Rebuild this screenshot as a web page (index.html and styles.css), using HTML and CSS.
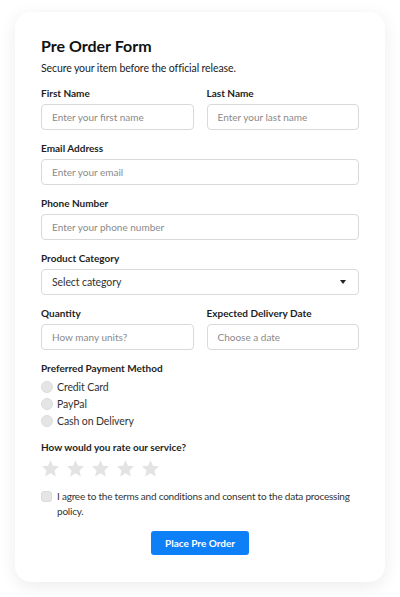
FILE: index.html
```html
<!DOCTYPE html>
<html lang="en">
<head>
<meta charset="utf-8">
<title>Pre Order Form</title>
<link rel="stylesheet" href="styles.css">
</head>
<body>
<form class="card">
  <h1 class="title">Pre Order Form</h1>
  <p class="subtitle">Secure your item before the official release.</p>

  <div class="row">
    <div class="group">
      <label class="label">First Name</label>
      <div class="input"><span class="ph">Enter your first name</span></div>
    </div>
    <div class="group">
      <label class="label">Last Name</label>
      <div class="input"><span class="ph">Enter your last name</span></div>
    </div>
  </div>

  <div class="group">
    <label class="label">Email Address</label>
    <div class="input"><span class="ph">Enter your email</span></div>
  </div>

  <div class="group">
    <label class="label">Phone Number</label>
    <div class="input"><span class="ph">Enter your phone number</span></div>
  </div>

  <div class="group">
    <label class="label">Product Category</label>
    <div class="input select"><span class="val">Select category</span><span class="caret"></span></div>
  </div>

  <div class="row">
    <div class="group">
      <label class="label">Quantity</label>
      <div class="input"><span class="ph">How many units?</span></div>
    </div>
    <div class="group">
      <label class="label">Expected Delivery Date</label>
      <div class="input"><span class="ph">Choose a date</span></div>
    </div>
  </div>

  <div class="group pay">
    <label class="label">Preferred Payment Method</label>
    <div class="radios">
      <div class="radio"><span class="dot"></span>Credit Card</div>
      <div class="radio"><span class="dot"></span>PayPal</div>
      <div class="radio"><span class="dot"></span>Cash on Delivery</div>
    </div>
  </div>

  <div class="group">
    <label class="label">How would you rate our service?</label>
    <div class="stars">
      <svg class="star" viewBox="0 0 24 24"><path d="M12 1.5l3.1 7.1 7.7.7-5.8 5.1 1.8 7.6L12 18l-6.8 4 1.8-7.6-5.8-5.1 7.7-.7z"/></svg>
      <svg class="star" viewBox="0 0 24 24"><path d="M12 1.5l3.1 7.1 7.7.7-5.8 5.1 1.8 7.6L12 18l-6.8 4 1.8-7.6-5.8-5.1 7.7-.7z"/></svg>
      <svg class="star" viewBox="0 0 24 24"><path d="M12 1.5l3.1 7.1 7.7.7-5.8 5.1 1.8 7.6L12 18l-6.8 4 1.8-7.6-5.8-5.1 7.7-.7z"/></svg>
      <svg class="star" viewBox="0 0 24 24"><path d="M12 1.5l3.1 7.1 7.7.7-5.8 5.1 1.8 7.6L12 18l-6.8 4 1.8-7.6-5.8-5.1 7.7-.7z"/></svg>
      <svg class="star" viewBox="0 0 24 24"><path d="M12 1.5l3.1 7.1 7.7.7-5.8 5.1 1.8 7.6L12 18l-6.8 4 1.8-7.6-5.8-5.1 7.7-.7z"/></svg>
    </div>
  </div>

  <div class="agree">
    <span class="box"></span>
    <span class="agree-text">I agree to the terms and conditions and consent to the data processing policy.</span>
  </div>

  <div class="actions">
    <button type="button" class="btn">Place Pre Order</button>
  </div>
</form>
</body>
</html>
```
FILE: styles.css
```css
* { box-sizing: border-box; }
html, body { margin: 0; padding: 0; background: #ffffff; }
body {
  font-family: Lato, "Open Sans", sans-serif;
  color: #222;
  padding: 12px 15px 16px;
}
.card {
  width: 370px;
  background: #fff;
  border-radius: 16px;
  box-shadow: 0 4px 18px rgba(0,0,0,0.08);
  padding: 24px 26px 27px;
}
.title {
  margin: 0;
  font-size: 16px;
  line-height: 20px;
  font-weight: 700;
  color: #111;
}
.subtitle {
  margin: 3px 0 9px;
  font-size: 10.5px;
  letter-spacing: -0.1px;
  line-height: 18px;
  color: #222;
}
.row {
  display: grid;
  grid-template-columns: 1fr 1fr;
  column-gap: 13px;
}
.group { margin-bottom: 11px; }
.label {
  display: block;
  font-size: 10px;
  line-height: 15px;
  font-weight: 700;
  color: #1e1e1e;
  margin-bottom: 3px;
}
.pay .label { margin-bottom: 2px; }
.input {
  height: 26px;
  border: 1px solid #d9d9d9;
  border-radius: 4px;
  display: flex;
  align-items: center;
  padding: 0 10px;
  font-size: 10px;
}
.ph { color: #8a8a8a; }
.val { color: #333; font-size: 10.5px; letter-spacing: -0.1px; }
.select { justify-content: space-between; padding-right: 12px; }
.caret {
  width: 0; height: 0;
  border-left: 3.5px solid transparent;
  border-right: 3.5px solid transparent;
  border-top: 4px solid #222;
}
.radios { display: flex; flex-direction: column; }
.radio {
  display: flex;
  align-items: center;
  gap: 4px;
  height: 17px;
  font-size: 10.5px;
  letter-spacing: -0.1px;
  color: #333;
}
.dot {
  width: 12px; height: 12px;
  border-radius: 50%;
  background: #e5e5e5;
  border: 1px solid #dcdcdc;
}
.stars { display: flex; gap: 6px; padding-top: 1px; }
.star { width: 19px; height: 19px; fill: #e3e3e3; }
.agree {
  display: flex;
  align-items: flex-start;
  gap: 5px;
  margin-top: 4px;
}
.box {
  flex: none;
  width: 11px; height: 11px;
  border-radius: 3px;
  background: #e5e5e5;
  border: 1px solid #dcdcdc;
  margin-top: 2px;
}
.agree-text {
  font-size: 10px;
  letter-spacing: -0.22px;
  line-height: 15px;
  color: #333;
}
.actions { display: flex; justify-content: center; margin-top: 12px; }
.btn {
  font-family: inherit;
  background: #0d7ff7;
  color: #fff;
  border: none;
  border-radius: 3px;
  height: 24px;
  padding: 0 14px;
  font-size: 10px;
  font-weight: 700;
}
```
